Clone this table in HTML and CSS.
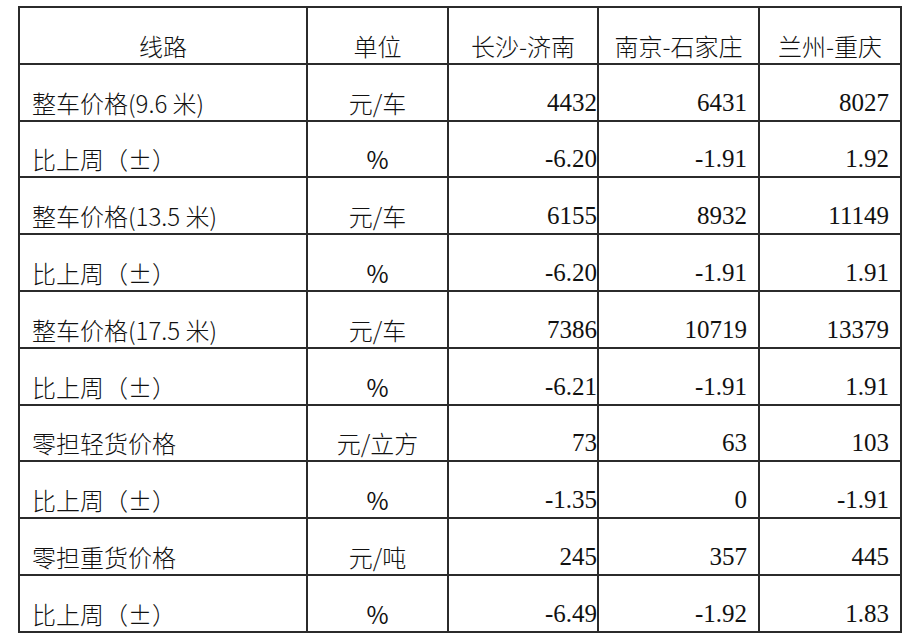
FILE: index.html
```html
<!DOCTYPE html>
<html lang="zh-CN">
<head>
<meta charset="utf-8">
<title>线路价格</title>
<link rel="stylesheet" href="styles.css">
</head>
<body>
<div class="wrap">
<table class="price-table">
  <colgroup>
    <col class="c-route">
    <col class="c-unit">
    <col class="c-a">
    <col class="c-b">
    <col class="c-c">
  </colgroup>
  <thead>
    <tr>
      <th class="cn center">线路</th>
      <th class="cn center">单位</th>
      <th class="cn center">长沙-济南</th>
      <th class="cn center">南京-石家庄</th>
      <th class="cn center">兰州-重庆</th>
    </tr>
  </thead>
  <tbody>
    <tr><td class="cn label">整车价格(9.6 米)</td><td class="cn center">元/车</td><td class="num first">4432</td><td class="num">6431</td><td class="num">8027</td></tr>
    <tr><td class="cn label">比上周（±）</td><td class="cn center pct">%</td><td class="num first">-6.20</td><td class="num">-1.91</td><td class="num">1.92</td></tr>
    <tr><td class="cn label">整车价格(13.5 米)</td><td class="cn center">元/车</td><td class="num first">6155</td><td class="num">8932</td><td class="num">11149</td></tr>
    <tr><td class="cn label">比上周（±）</td><td class="cn center pct">%</td><td class="num first">-6.20</td><td class="num">-1.91</td><td class="num">1.91</td></tr>
    <tr><td class="cn label">整车价格(17.5 米)</td><td class="cn center">元/车</td><td class="num first">7386</td><td class="num">10719</td><td class="num">13379</td></tr>
    <tr><td class="cn label">比上周（±）</td><td class="cn center pct">%</td><td class="num first">-6.21</td><td class="num">-1.91</td><td class="num">1.91</td></tr>
    <tr><td class="cn label">零担轻货价格</td><td class="cn center">元/立方</td><td class="num first">73</td><td class="num">63</td><td class="num">103</td></tr>
    <tr><td class="cn label">比上周（±）</td><td class="cn center pct">%</td><td class="num first">-1.35</td><td class="num">0</td><td class="num">-1.91</td></tr>
    <tr><td class="cn label">零担重货价格</td><td class="cn center">元/吨</td><td class="num first">245</td><td class="num">357</td><td class="num">445</td></tr>
    <tr><td class="cn label">比上周（±）</td><td class="cn center pct">%</td><td class="num first">-6.49</td><td class="num">-1.92</td><td class="num">1.83</td></tr>
  </tbody>
</table>
</div>
</body>
</html>
```
FILE: styles.css
```css
html, body {
  margin: 0;
  padding: 0;
  background: #ffffff;
}

.wrap {
  padding: 6px 0 0 18px;
}

.price-table {
  border-collapse: collapse;
  table-layout: fixed;
  width: 882px;
  color: #111;
}

.c-route { width: 288px; }
.c-unit { width: 141px; }
.c-a { width: 150px; }
.c-b { width: 161px; }
.c-c { width: 142px; }

.price-table tr {
  height: 56.8px;
}

.price-table th,
.price-table td {
  border: 2px solid #2b2b2b;
  vertical-align: bottom;
  padding: 0 0 2px 0;
  line-height: 30px;
  font-weight: 400;
  white-space: nowrap;
}

.price-table .cn {
  font-family: "Noto Sans CJK SC", "Noto Sans", sans-serif;
  font-size: 24px;
  font-weight: 300;
}

.price-table .center {
  text-align: center;
}

.price-table td.pct {
  font-weight: 400;
}

.price-table td.label {
  text-align: left;
  padding-left: 12px;
}

.price-table td.num {
  font-family: "Liberation Serif", "Times New Roman", serif;
  font-size: 25px;
  text-align: right;
  padding-right: 11px;
}

.price-table td.num.first {
  padding-right: 0;
}
```
